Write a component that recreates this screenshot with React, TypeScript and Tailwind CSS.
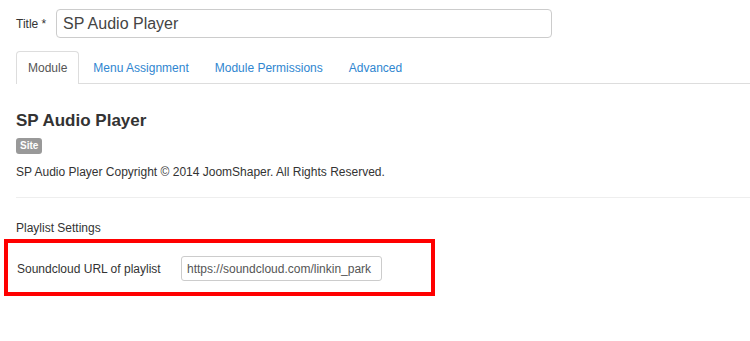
const tabs = ['Module', 'Menu Assignment', 'Module Permissions', 'Advanced'];

export default function App() {
  return (
    <div
      className="w-[750px] h-[341px] overflow-hidden bg-white text-[12px] text-[#333]"
      style={{ fontFamily: '"Liberation Sans", Arial, sans-serif' }}
    >
      {/* Title */}
      <div className="flex items-center pl-4 pt-[9px]">
        <label className="w-[40px] leading-[18px]">Title *</label>
        <input
          readOnly
          value="SP Audio Player"
          className="w-[496px] h-[29px] border border-[#ccc] rounded-[4px] px-[6px] text-[16px] text-[#444] outline-none"
          style={{ fontFamily: '"Liberation Sans", Arial, sans-serif' }}
        />
      </div>

      {/* Tabs */}
      <div className="ml-4 mt-[13px] flex border-b border-[#ddd]">
        {tabs.map((t, i) => (
          <div
            key={t}
            className={
              i === 0
                ? 'h-[33px] -mb-px mr-[2px] flex items-center px-[11px] bg-white border border-b-0 border-[#ddd] rounded-t-[4px] text-[#555] leading-[18px]'
                : 'h-[33px] -mb-px mr-[2px] flex items-center px-3 text-[#2f86d0] leading-[18px]'
            }
          >
            {t}
          </div>
        ))}
      </div>

      {/* Module info */}
      <div className="pl-4">
        <h3 className="mt-[27px] text-[17px] leading-[20px] font-bold text-[#333]">
          SP Audio Player
        </h3>
        <span className="mt-[7px] inline-block h-[16px] px-[4px] rounded-[3px] bg-[#999] text-white text-[10px] font-bold leading-[16px] align-top">
          Site
        </span>
        <p className="mt-[9px] leading-[18px]">
          SP Audio Player Copyright © 2014 JoomShaper. All Rights Reserved.
        </p>
      </div>

      <div className="ml-4 mt-[16px] border-t border-[#eee]" />

      <div className="pl-4 mt-[21px] leading-[18px]">Playlist Settings</div>

      {/* Highlighted field */}
      <div className="ml-[4px] mt-[2px] w-[431px] h-[57px] border-4 border-[#ff0000] flex items-center pl-[9px] pt-[2px]">
        <label className="w-[164px] leading-[18px]">Soundcloud URL of playlist</label>
        <input
          readOnly
          value="https://soundcloud.com/linkin_park"
          className="w-[201px] h-[25px] border border-[#ccc] rounded-[3px] px-[5px] text-[12px] text-[#555] outline-none"
          style={{ fontFamily: '"Liberation Sans", Arial, sans-serif' }}
        />
      </div>
    </div>
  );
}
